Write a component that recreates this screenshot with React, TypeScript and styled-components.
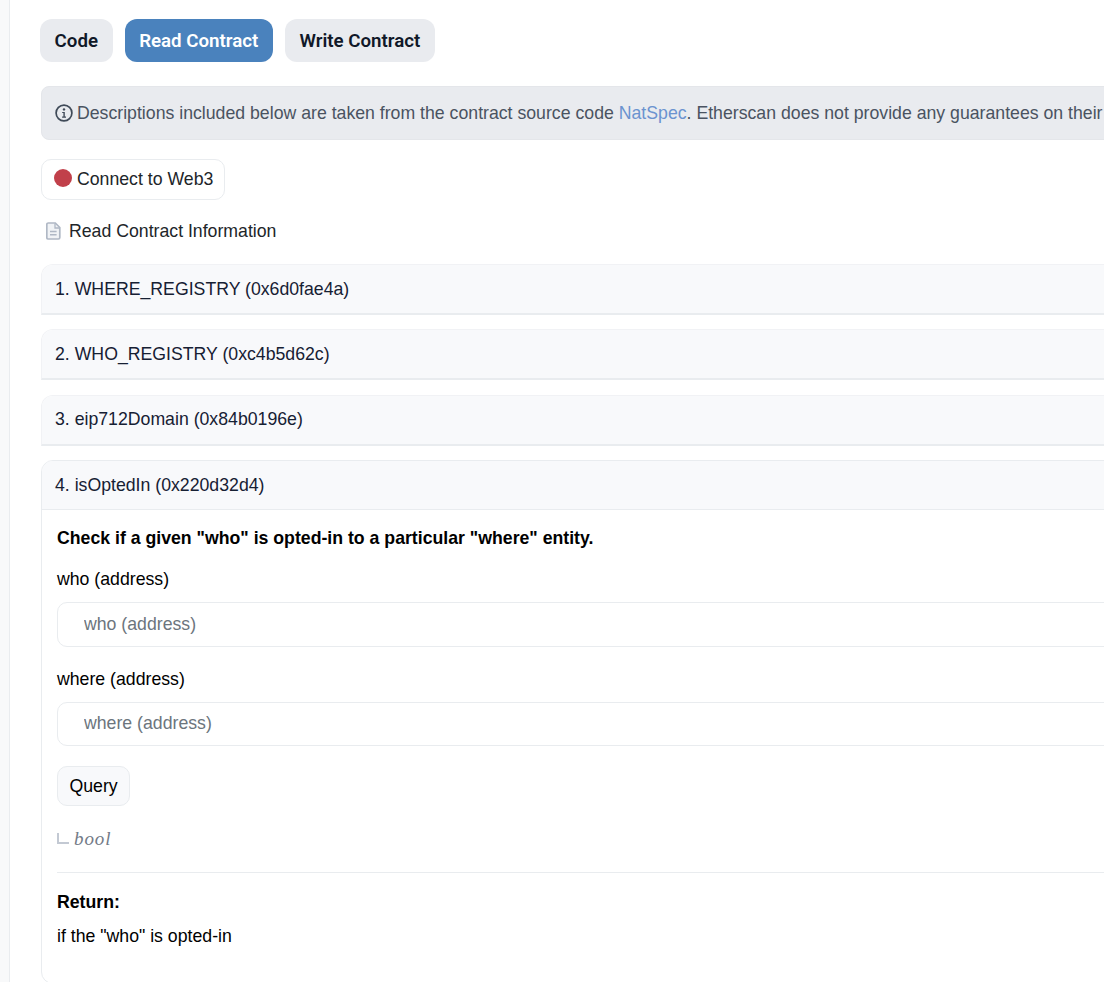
import React from "react";
import styled, { createGlobalStyle } from "styled-components";

const GlobalStyle = createGlobalStyle`
  html, body {
    margin: 0;
    padding: 0;
    background: #fff;
    overflow: hidden;
  }
  body {
    font-family: "Liberation Sans", Arial, sans-serif;
    font-size: 17.7px;
    color: #212529;
  }
`;

const Page = styled.div`
  display: flex;
  width: 1104px;
  height: 982px;
  overflow: hidden;
  background: #fff;
`;

const Rail = styled.div`
  flex: 0 0 9px;
  background: #f8f9fa;
  border-right: 1px solid #e9ecef;
`;

const Main = styled.main`
  flex: 0 0 1300px;
  padding: 19px 0 0 30px;
`;

const Tabs = styled.nav`
  display: flex;
  gap: 12px;
  margin-bottom: 24px;
`;

const Tab = styled.button<{ $active?: boolean }>`
  height: 43px;
  padding: 0 14.6px;
  border: 0;
  border-radius: 12px;
  background: ${(p) => (p.$active ? "#4a82bd" : "#e9ebef")};
  color: ${(p) => (p.$active ? "#fff" : "#101828")};
  font-family: Roboto, sans-serif;
  font-size: 18.7px;
  font-weight: 600;
`;

const Indented = styled.div`
  margin-left: 1px;
`;

const Notice = styled.div`
  display: flex;
  align-items: center;
  gap: 4.5px;
  height: 54px;
  box-sizing: border-box;
  padding-left: 12.5px;
  border: 1px solid #e4e6ea;
  border-radius: 8px;
  background: #e9ebef;
  color: #4a5361;
  white-space: nowrap;
`;

const NatSpec = styled.a`
  color: #6b93d0;
  text-decoration: none;
`;

const ConnectButton = styled.button`
  display: inline-flex;
  align-items: center;
  gap: 5px;
  height: 41px;
  margin-top: 19px;
  padding: 0 11px 0 12px;
  border: 1px solid #e9ecef;
  border-radius: 10px;
  background: #fff;
  color: #212529;
  font: inherit;
`;

const Dot = styled.span`
  width: 18px;
  height: 18px;
  margin-bottom: 3px;
  border-radius: 50%;
  background: #c1404a;
`;

const SectionTitle = styled.div`
  display: flex;
  align-items: center;
  gap: 8px;
  height: 24px;
  margin: 19px 0 21px 5px;
`;

const Accordion = styled.section<{ $open?: boolean }>`
  box-sizing: border-box;
  margin-bottom: ${(p) => (p.$open ? "0" : "14.33px")};
  border: 1px solid ${(p) => (p.$open ? "#e9ecef" : "#f1f2f5")};
  border-bottom-color: #e9ecef;
  border-bottom-width: ${(p) => (p.$open ? "1px" : "2px")};
  border-radius: ${(p) => (p.$open ? "12px" : "12px 12px 0 0")};
  overflow: hidden;
`;

const AccordionHead = styled.div<{ $open?: boolean }>`
  display: flex;
  align-items: center;
  height: ${(p) => (p.$open ? "49px" : "48px")};
  padding: ${(p) => (p.$open ? "1px" : "0")} 0 0 13px;
  box-sizing: border-box;
  background: #f8f9fb;
  color: #162033;
  border-bottom: ${(p) => (p.$open ? "1px solid #e9ecef" : "0")};
`;

const AccordionBody = styled.div`
  padding: 16px 15px 36px;
  color: #000;
  height: 473px;
  box-sizing: border-box;
`;

const Heading = styled.div`
  font-weight: 700;
  line-height: 24px;
`;

const FieldLabel = styled.label`
  display: block;
  margin-top: 17px;
  line-height: 24px;
`;

const FieldLabelNext = styled(FieldLabel)`
  margin-top: 20px;
`;

const TextField = styled.input`
  display: block;
  box-sizing: border-box;
  width: 100%;
  height: 45px;
  margin-top: 11px;
  padding: 0 26px;
  border: 1px solid #e9ecef;
  border-radius: 10px;
  background: #fff;
  font: inherit;
  &::placeholder {
    color: #6c757d;
    opacity: 1;
  }
`;

const LastTextField = styled(TextField)`
  height: 44px;
`;

const QueryButton = styled.button`
  display: block;
  height: 40px;
  margin-top: 20px;
  padding: 1px 11.5px 0;
  border: 1px solid #e9ecef;
  border-radius: 10px;
  background: #f8f9fb;
  color: #000;
  font: inherit;
`;

const ReturnType = styled.div`
  display: flex;
  align-items: center;
  gap: 5px;
  height: 24px;
  margin-top: 21px;
`;

const TypeName = styled.i`
  font-family: "Liberation Serif", serif;
  font-size: 19px;
  letter-spacing: 0.9px;
  color: #737b87;
`;

const Divider = styled.hr`
  margin: 21px 0 17px;
  border: 0;
  border-top: 1px solid #e9ecef;
`;

const Paragraph = styled.div`
  margin-top: 10px;
  line-height: 24px;
`;

const InfoIcon = () => (
  <svg width="18" height="18" viewBox="0 0 18 18" fill="none">
    <circle cx="9" cy="9" r="7.9" stroke="#3f4a58" strokeWidth="1.7" />
    <circle cx="9" cy="5.4" r="1.2" fill="#3f4a58" />
    <path d="M7.2 8h2.6v4.6h1.2v1.1H7.1v-1.1h1.3V9.1H7.2z" fill="#3f4a58" />
  </svg>
);

const FileIcon = () => (
  <svg width="15" height="18" viewBox="0 0 15 18" fill="none">
    <path
      d="M2.2 1h7.1L13.8 5.5V15.6a1.4 1.4 0 0 1-1.4 1.4H2.2A1.4 1.4 0 0 1 .8 15.6V2.4A1.4 1.4 0 0 1 2.2 1z"
      fill="#f1f3f6"
      stroke="#b0b8c5"
      strokeWidth="1.7"
    />
    <path d="M9 1.4V6h4.4" stroke="#b0b8c5" strokeWidth="1.3" />
    <path d="M4 9.6h6.6M4 12.8h6.6" stroke="#b0b8c5" strokeWidth="1.5" />
  </svg>
);

const ReturnArrow = () => (
  <svg width="12" height="12" viewBox="0 0 12 12" fill="none">
    <path d="M1 0v10h11" stroke="#c3c9d3" strokeWidth="2" />
  </svg>
);

const methods = [
  "1. WHERE_REGISTRY (0x6d0fae4a)",
  "2. WHO_REGISTRY (0xc4b5d62c)",
  "3. eip712Domain (0x84b0196e)",
];

export default function App() {
  return (
    <Page>
      <GlobalStyle />
      <Rail />
      <Main>
        <Tabs>
          <Tab>Code</Tab>
          <Tab $active>Read Contract</Tab>
          <Tab>Write Contract</Tab>
        </Tabs>
        <Indented>
          <Notice>
            <InfoIcon />
            <span>
              Descriptions included below are taken from the contract source code{" "}
              <NatSpec href="#">NatSpec</NatSpec>. Etherscan does not provide any guarantees on
              their
            </span>
          </Notice>
          <ConnectButton>
            <Dot />
            Connect to Web3
          </ConnectButton>
          <SectionTitle>
            <FileIcon />
            Read Contract Information
          </SectionTitle>
          {methods.map((m) => (
            <Accordion key={m}>
              <AccordionHead>{m}</AccordionHead>
            </Accordion>
          ))}
          <Accordion $open>
            <AccordionHead $open>4. isOptedIn (0x220d32d4)</AccordionHead>
            <AccordionBody>
              <Heading>Check if a given "who" is opted-in to a particular "where" entity.</Heading>
              <FieldLabel>who (address)</FieldLabel>
              <TextField placeholder="who (address)" />
              <FieldLabelNext>where (address)</FieldLabelNext>
              <LastTextField placeholder="where (address)" />
              <QueryButton>Query</QueryButton>
              <ReturnType>
                <ReturnArrow />
                <TypeName>bool</TypeName>
              </ReturnType>
              <Divider />
              <Heading>Return:</Heading>
              <Paragraph>if the "who" is opted-in</Paragraph>
            </AccordionBody>
          </Accordion>
        </Indented>
      </Main>
    </Page>
  );
}
